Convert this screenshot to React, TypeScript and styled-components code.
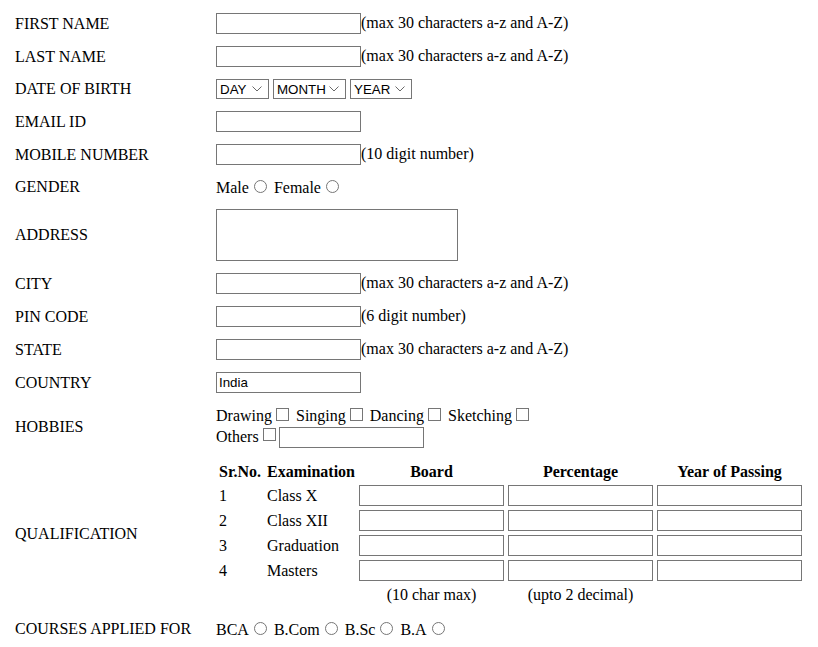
import React from "react";
import styled, { createGlobalStyle } from "styled-components";

const GlobalStyle = createGlobalStyle`
  html, body {
    margin: 0;
    padding: 0;
    background: #ffffff;
  }
  body {
    font-family: "Liberation Serif", "Times New Roman", serif;
    font-size: 16px;
    color: #000000;
  }
`;

const Page = styled.div`
  padding: 13px 0 0 15px;
`;

const Form = styled.div`
  display: grid;
  grid-template-columns: 201px max-content;
  row-gap: 12px;
  align-items: center;
`;

const Label = styled.div`
  font-size: 16px;
  line-height: normal;
  white-space: nowrap;
`;

const Field = styled.div`
  line-height: normal;
  white-space: nowrap;
`;

const Line = styled.div`
  line-height: normal;
  white-space: nowrap;
`;

const TextInput = styled.input<{ $w?: number }>`
  box-sizing: border-box;
  width: ${(p) => p.$w ?? 145}px;
  height: 21px;
  margin: 0;
  padding: 1px 2px;
  border: 1px solid #767676;
  border-radius: 0;
  background: #ffffff;
  color: #000000;
  font-family: "Liberation Sans", Arial, sans-serif;
  font-size: 13.333px;
  vertical-align: baseline;
  outline: none;
`;

const Hint = styled.span`
  font-size: 16px;
`;

const SelectBox = styled.span<{ $w: number }>`
  display: inline-flex;
  align-items: center;
  justify-content: space-between;
  box-sizing: border-box;
  width: ${(p) => p.$w}px;
  height: 20px;
  padding: 0 6px 0 3px;
  border: 1px solid #767676;
  background: #ffffff;
  font-family: "Liberation Sans", Arial, sans-serif;
  font-size: 13.333px;
  color: #000000;
  vertical-align: baseline;
`;

const Chevron = styled.svg`
  flex: none;
  display: block;
`;

const Radio = styled.input.attrs({ type: "radio" })`
  appearance: none;
  -webkit-appearance: none;
  display: inline-block;
  box-sizing: border-box;
  width: 13px;
  height: 13px;
  margin: 3px 3px 0 5px;
  border: 1px solid #767676;
  border-radius: 50%;
  background: #ffffff;
  vertical-align: baseline;
`;

const Check = styled.input.attrs({ type: "checkbox" })<{ $raise?: number }>`
  appearance: none;
  -webkit-appearance: none;
  display: inline-block;
  box-sizing: border-box;
  width: 13px;
  height: 13px;
  margin: 3px 3px 0 4px;
  border: 1px solid #767676;
  border-radius: 0;
  background: #ffffff;
  vertical-align: ${(p) => (p.$raise ? `${p.$raise}px` : "baseline")};
`;

const TextArea = styled.textarea`
  display: block;
  box-sizing: border-box;
  width: 242px;
  height: 52px;
  margin: 0;
  padding: 2px;
  border: 1px solid #767676;
  border-radius: 0;
  resize: none;
  font-family: "Liberation Mono", monospace;
  font-size: 13.333px;
  outline: none;
`;

const QualGrid = styled.div`
  display: grid;
  grid-template-columns: 44px 88px 145px 145px 145px;
  gap: 4px;
  padding: 3px;
  align-items: center;
  line-height: normal;
`;

const Head = styled.div<{ $center?: boolean }>`
  font-weight: bold;
  text-align: ${(p) => (p.$center ? "center" : "left")};
  white-space: nowrap;
`;

const Cell = styled.div`
  white-space: nowrap;
`;

const Note = styled.div<{ $col: number }>`
  grid-column: ${(p) => p.$col};
  padding-top: 1px;
  text-align: center;
  white-space: nowrap;
`;

const Select: React.FC<{ label: string; w: number }> = ({ label, w }) => (
  <SelectBox $w={w} role="combobox">
    <span>{label}</span>
    <Chevron width="10" height="6" viewBox="0 0 10 6">
      <path d="M0.5 0.5 L5 5 L9.5 0.5" fill="none" stroke="#6a6a6a" strokeWidth="1" />
    </Chevron>
  </SelectBox>
);

const NAME_HINT = "(max 30 characters a-z and A-Z)";

const exams = ["Class X", "Class XII", "Graduation", "Masters"];

export default function App() {
  return (
    <>
      <GlobalStyle />
      <Page>
        <Form>
          <Label>FIRST NAME</Label>
          <Field>
            <TextInput type="text" />
            <Hint>{NAME_HINT}</Hint>
          </Field>

          <Label>LAST NAME</Label>
          <Field>
            <TextInput type="text" />
            <Hint>{NAME_HINT}</Hint>
          </Field>

          <Label>DATE OF BIRTH</Label>
          <Field>
            <Select label="DAY" w={53} /> <Select label="MONTH" w={73} /> <Select label="YEAR" w={62} />
          </Field>

          <Label>EMAIL ID</Label>
          <Field>
            <TextInput type="text" />
          </Field>

          <Label>MOBILE NUMBER</Label>
          <Field>
            <TextInput type="text" />
            <Hint>(10 digit number)</Hint>
          </Field>

          <Label>GENDER</Label>
          <Field>
            Male<Radio name="gender" /> Female<Radio name="gender" />
          </Field>

          <Label>ADDRESS</Label>
          <Field>
            <TextArea />
          </Field>

          <Label>CITY</Label>
          <Field>
            <TextInput type="text" />
            <Hint>{NAME_HINT}</Hint>
          </Field>

          <Label>PIN CODE</Label>
          <Field>
            <TextInput type="text" />
            <Hint>(6 digit number)</Hint>
          </Field>

          <Label>STATE</Label>
          <Field>
            <TextInput type="text" />
            <Hint>{NAME_HINT}</Hint>
          </Field>

          <Label>COUNTRY</Label>
          <Field>
            <TextInput type="text" defaultValue="India" />
          </Field>

          <Label>HOBBIES</Label>
          <Field>
            <Line>
              Drawing<Check /> Singing<Check /> Dancing<Check /> Sketching<Check />
            </Line>
            <Line>
              Others<Check $raise={1} />
              <TextInput type="text" />
            </Line>
          </Field>

          <Label>QUALIFICATION</Label>
          <Field>
            <QualGrid>
              <Head>Sr.No.</Head>
              <Head>Examination</Head>
              <Head $center>Board</Head>
              <Head $center>Percentage</Head>
              <Head $center>Year of Passing</Head>
              {exams.map((exam, i) => (
                <React.Fragment key={exam}>
                  <Cell>{i + 1}</Cell>
                  <Cell>{exam}</Cell>
                  <TextInput type="text" />
                  <TextInput type="text" />
                  <TextInput type="text" />
                </React.Fragment>
              ))}
              <Note $col={3}>(10 char max)</Note>
              <Note $col={4}>(upto 2 decimal)</Note>
            </QualGrid>
          </Field>

          <Label>COURSES APPLIED FOR</Label>
          <Field>
            BCA<Radio name="course" /> B.Com<Radio name="course" /> B.Sc<Radio name="course" /> B.A<Radio name="course" />
          </Field>
        </Form>
      </Page>
    </>
  );
}
